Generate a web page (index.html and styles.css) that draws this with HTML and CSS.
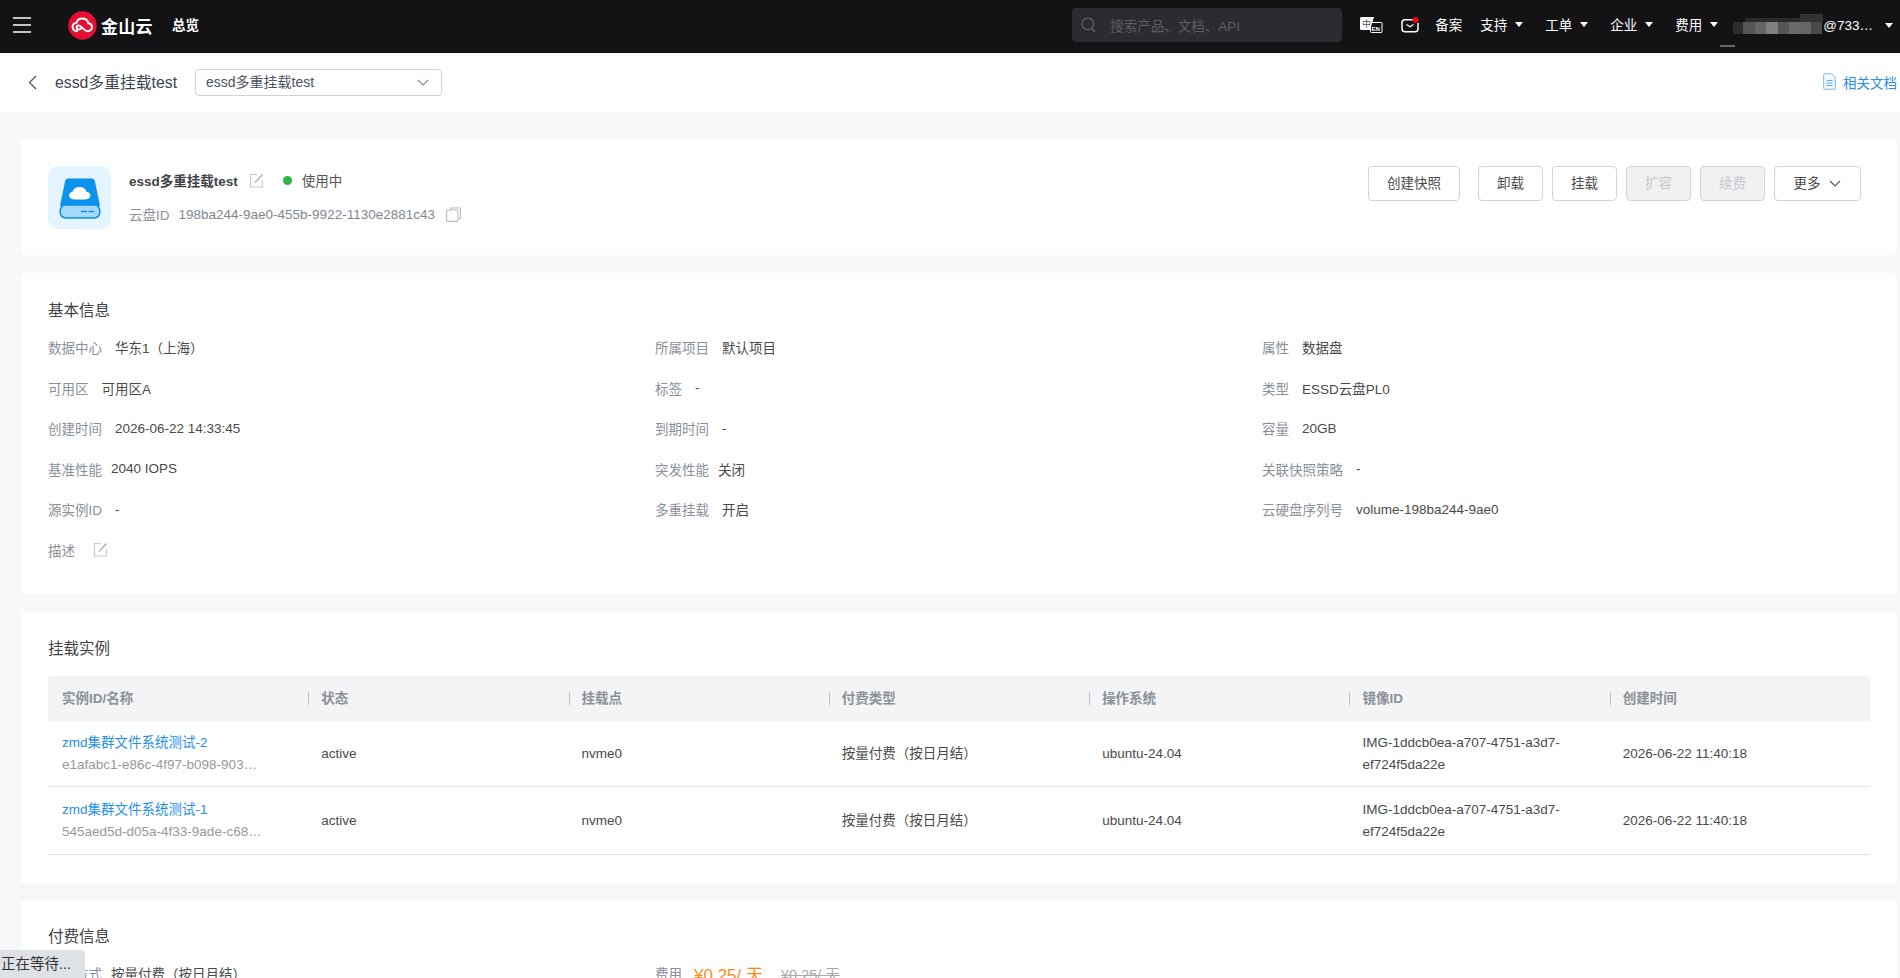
FILE: index.html
```html
<!DOCTYPE html>
<html lang="zh-CN">
<head>
    <meta charset="UTF-8">
    <meta name="viewport" content="width=device-width, initial-scale=1.0">
    <title>云盘详情</title>
    <link rel="stylesheet" href="styles.css">
</head>
<body>
    <header class="topbar">
        <div class="topbar-left">
            <svg class="menu-icon" width="18" height="16" viewBox="0 0 18 16"><path d="M0 1h18M0 8h18M0 15h18" stroke="#fff" stroke-width="1.6"/></svg>
            <svg class="logo-mark" width="29" height="29" viewBox="0 0 29 29">
                <circle cx="14.5" cy="14.5" r="14.2" fill="#e60f32"/>
                <path d="M9 20.2c-2.6 0-4.4-1.8-4.4-4.1 0-2.2 1.6-3.9 3.8-4 .7-2.7 3-4.5 5.9-4.5 3 0 5.4 2 6 4.7 2.1.3 3.6 1.9 3.6 3.9 0 2.2-1.8 4-4.2 4-2.4 0-3.8-1.6-5.3-3.2-1.3-1.4-2.3-2.5-3.7-2.5-1.2 0-2.1.9-2.1 2 0 1.2.9 2 2.1 2 .8 0 1.5-.4 2.2-1" fill="none" stroke="#fff" stroke-width="2" stroke-linecap="round" stroke-linejoin="round"/>
            </svg>
            <span class="logo-text">金山云</span>
            <span class="overview">总览</span>
        </div>
        <div class="topbar-right">
            <div class="search-box">
                <svg width="15" height="16" viewBox="0 0 15 16"><circle cx="6.8" cy="6.8" r="5.8" fill="none" stroke="#66666c" stroke-width="1.2"/><path d="M11 11.5l3 3.5" stroke="#66666c" stroke-width="1.2"/></svg>
                <span>搜索产品、文档、API</span>
            </div>
            <svg class="lang-icon" width="23" height="16" viewBox="0 0 23 16">
                <rect x="10.5" y="5.5" width="11.5" height="10" rx="1" fill="#131315" stroke="#fff"/>
                <path d="M1.5 0H14L10 13H1.5A1.5 1.5 0 0 1 0 11.5V1.5A1.5 1.5 0 0 1 1.5 0z" fill="#fff"/>
                <text x="2" y="9.5" class="lang-zh">中</text>
                <text x="11.5" y="13.5" class="lang-en">EN</text>
            </svg>
            <svg class="mail-icon" width="19" height="16" viewBox="0 0 19 16">
                <path d="M13 2.8H5a3 3 0 0 0-3 3v6a3 3 0 0 0 3 3h10a3 3 0 0 0 3-3V6" fill="none" stroke="#fff" stroke-width="1.5"/>
                <path d="M6.5 7.5l3.5 2.3 3.5-2.3" fill="none" stroke="#fff" stroke-width="1.2"/>
                <circle cx="15.5" cy="3" r="3" fill="#f00010"/>
            </svg>
            <span class="nav-item">备案</span>
            <span class="nav-item has-caret">支持</span>
            <span class="nav-item has-caret">工单</span>
            <span class="nav-item has-caret">企业</span>
            <span class="nav-item has-caret">费用</span>
            <div class="user">
                <svg class="mosaic" width="103" height="44" viewBox="0 0 103 44">
                    <rect x="0" y="42" width="15" height="2" fill="#66666a"/>
                    <rect x="25" y="15" width="55" height="4" fill="#2a2a2c"/>
                    <rect x="80" y="11" width="23" height="8" fill="#333335"/>
                    <rect x="13" y="19" width="10" height="12" fill="#2c2c2e"/>
                    <rect x="23" y="19" width="12" height="12" fill="#555557"/>
                    <rect x="35" y="19" width="11" height="12" fill="#666668"/>
                    <rect x="46" y="19" width="12" height="12" fill="#808082"/>
                    <rect x="58" y="19" width="11" height="12" fill="#555557"/>
                    <rect x="69" y="19" width="11" height="12" fill="#6a6a6c"/>
                    <rect x="80" y="19" width="11" height="12" fill="#666668"/>
                    <rect x="91" y="19" width="11" height="12" fill="#4a4a4c"/>
                </svg>
                <span>@733…</span>
                <i class="caret"></i>
            </div>
        </div>
    </header>

    <div class="subheader">
        <div class="subheader-left">
            <svg class="back-icon" width="9" height="15" viewBox="0 0 9 15"><path d="M8 1L1.5 7.5 8 14" fill="none" stroke="#4b5566" stroke-width="1.3"/></svg>
            <span class="disk-name">essd多重挂载test</span>
            <div class="disk-select">
                <span>essd多重挂载test</span>
                <svg width="12" height="7" viewBox="0 0 12 7"><path d="M1 1l5 5 5-5" fill="none" stroke="#7d8794" stroke-width="1.1"/></svg>
            </div>
        </div>
        <a class="doc-link">
            <svg width="13" height="17" viewBox="0 0 13 17"><path d="M1.5.7h6.8l4 4v10.3a1.3 1.3 0 0 1-1.3 1.3H1.5A1.3 1.3 0 0 1 .7 15V2A1.3 1.3 0 0 1 1.5.7z" fill="#f2f8fe" stroke="#7db8f3"/><path d="M3.5 7.5h6M3.5 10h6M3.5 12.5h6" stroke="#5aa5ef" stroke-width="1.2"/></svg>
            <span>相关文档</span>
        </a>
    </div>

    <main class="content">
        <section class="card summary-card">
            <div class="summary-left">
                <div class="disk-avatar">
                    <svg width="42" height="42" viewBox="0 0 42 42">
                        <path d="M9.5 1.5h23a3.5 3.5 0 0 1 3.4 2.8L41 29H1L6.1 4.3A3.5 3.5 0 0 1 9.5 1.5z" fill="#0b92ee"/>
                        <rect x="1.2" y="28" width="39.6" height="13" rx="5.5" fill="#a5d8fb" stroke="#0b92ee" stroke-width="1.5"/>
                        <path d="M22 34.5h6M29.5 34.5h5.5" stroke="#0b92ee" stroke-width="1.6"/>
                        <path d="M15 22.5c-3 0-5-1.6-5-3.9 0-2.1 1.6-3.6 3.6-3.8.6-2.8 3.5-4.8 6.9-4.8 3.6 0 6.4 2.1 7 4.8 2.2.2 3.9 1.7 3.9 3.8 0 2.3-2 3.9-5 3.9z" fill="#fff"/>
                    </svg>
                </div>
                <div class="summary-text">
                    <div class="summary-name">
                        <strong>essd多重挂载test</strong>
                        <svg class="edit-icon" width="15" height="15" viewBox="0 0 15 15"><path d="M8 1.5H1.5v12.5h12V7.5" fill="none" stroke="#c5cad1" stroke-width="1.2"/><path d="M6 9.5L13.5 1.5" stroke="#a4abb5" stroke-width="1.2"/></svg>
                        <i class="status-dot"></i>
                        <span class="status-text">使用中</span>
                    </div>
                    <div class="summary-id">
                        <span class="id-label">云盘ID</span>
                        <span class="id-value">198ba244-9ae0-455b-9922-1130e2881c43</span>
                        <svg width="15" height="15" viewBox="0 0 15 15"><path d="M4.5 2.5V1h10v10.5h-2" fill="none" stroke="#b4bac3" stroke-width="1.1"/><rect x=".6" y="3" width="11.4" height="11.4" rx="1" fill="none" stroke="#b4bac3" stroke-width="1.1"/></svg>
                    </div>
                </div>
            </div>
            <div class="actions">
                <button class="btn btn-snapshot">创建快照</button>
                <button class="btn">卸载</button>
                <button class="btn">挂载</button>
                <button class="btn btn-disabled">扩容</button>
                <button class="btn btn-disabled">续费</button>
                <button class="btn btn-more">更多
                    <svg width="12" height="7" viewBox="0 0 12 7"><path d="M1 1l5 5 5-5" fill="none" stroke="#555" stroke-width="1.1"/></svg>
                </button>
            </div>
        </section>

        <section class="card info-card">
            <h3 class="card-title">基本信息</h3>
            <div class="info-grid">
                <div class="field"><span class="field-label">数据中心</span><span>华东1（上海）</span></div>
                <div class="field"><span class="field-label">所属项目</span><span>默认项目</span></div>
                <div class="field"><span class="field-label">属性</span><span>数据盘</span></div>

                <div class="field"><span class="field-label">可用区</span><span>可用区A</span></div>
                <div class="field"><span class="field-label">标签</span><span>-</span></div>
                <div class="field"><span class="field-label">类型</span><span>ESSD云盘PL0</span></div>

                <div class="field"><span class="field-label">创建时间</span><span>2026-06-22 14:33:45</span></div>
                <div class="field"><span class="field-label">到期时间</span><span>-</span></div>
                <div class="field"><span class="field-label">容量</span><span>20GB</span></div>

                <div class="field field-tight"><span class="field-label">基准性能</span><span>2040 IOPS</span></div>
                <div class="field field-tight"><span class="field-label">突发性能</span><span>关闭</span></div>
                <div class="field"><span class="field-label">关联快照策略</span><span>-</span></div>

                <div class="field"><span class="field-label">源实例ID</span><span>-</span></div>
                <div class="field"><span class="field-label">多重挂载</span><span>开启</span></div>
                <div class="field"><span class="field-label">云硬盘序列号</span><span>volume-198ba244-9ae0</span></div>

                <div class="field field-desc">
                    <span class="field-label">描述</span>
                    <svg class="edit-icon" width="15" height="15" viewBox="0 0 15 15"><path d="M8 1.5H1.5v12.5h12V7.5" fill="none" stroke="#c5cad1" stroke-width="1.2"/><path d="M6 9.5L13.5 1.5" stroke="#a4abb5" stroke-width="1.2"/></svg>
                </div>
            </div>
        </section>

        <section class="card mount-card">
            <h3 class="card-title">挂载实例</h3>
            <table class="mount-table">
                <thead>
                    <tr>
                        <th><span>实例ID/名称</span></th>
                        <th><span>状态</span></th>
                        <th><span>挂载点</span></th>
                        <th><span>付费类型</span></th>
                        <th><span>操作系统</span></th>
                        <th><span>镜像ID</span></th>
                        <th><span>创建时间</span></th>
                    </tr>
                </thead>
                <tbody>
                    <tr>
                        <td><a class="instance-link">zmd集群文件系统测试-2</a><div class="instance-id">e1afabc1-e86c-4f97-b098-903…</div></td>
                        <td>active</td>
                        <td>nvme0</td>
                        <td>按量付费（按日月结）</td>
                        <td>ubuntu-24.04</td>
                        <td>IMG-1ddcb0ea-a707-4751-a3d7-ef724f5da22e</td>
                        <td>2026-06-22 11:40:18</td>
                    </tr>
                    <tr class="row-last">
                        <td><a class="instance-link">zmd集群文件系统测试-1</a><div class="instance-id">545aed5d-d05a-4f33-9ade-c68…</div></td>
                        <td>active</td>
                        <td>nvme0</td>
                        <td>按量付费（按日月结）</td>
                        <td>ubuntu-24.04</td>
                        <td>IMG-1ddcb0ea-a707-4751-a3d7-ef724f5da22e</td>
                        <td>2026-06-22 11:40:18</td>
                    </tr>
                </tbody>
            </table>
        </section>

        <section class="card billing-card">
            <h3 class="card-title">付费信息</h3>
            <div class="info-grid">
                <div class="field field-tight"><span class="field-label">付费方式</span><span>按量付费（按日月结）</span></div>
                <div class="field field-price">
                    <span class="field-label">费用</span>
                    <span class="price">¥0.25/ 天</span>
                    <span class="price-old">¥0.25/ 天</span>
                </div>
            </div>
        </section>
    </main>

    <div class="status-bubble">正在等待...</div>
</body>
</html>
```

FILE: styles.css
```css
html, body {
    height: 978px;
    overflow: hidden;
}
body {
    margin: 0;
    padding: 0;
    background-color: #f7f8fa;
    font-family: "Liberation Sans", "Noto Sans CJK SC", sans-serif;
    font-size: 13.5px;
    color: #4a4a4a;
}

/* 顶部导航 */
.topbar {
    height: 53px;
    box-sizing: border-box;
    padding-bottom: 3px;
    background-color: #131315;
    display: flex;
    justify-content: space-between;
    align-items: center;
    color: #fff;
}
.topbar-left {
    display: flex;
    align-items: center;
    padding-left: 13px;
}
.menu-icon {
    margin-right: 37px;
}
.logo-text {
    margin-left: 4px;
    font-size: 17px;
    font-weight: bold;
    letter-spacing: 0.3px;
}
.overview {
    margin-left: 19px;
    margin-top: -2px;
    font-weight: bold;
}
.topbar-right {
    display: flex;
    align-items: center;
    padding-right: 7px;
}
.search-box {
    width: 270px;
    height: 34px;
    box-sizing: border-box;
    padding-left: 9px;
    background-color: #2b2b31;
    border-radius: 4px;
    display: flex;
    align-items: center;
    gap: 14px;
    color: #5e5e64;
    margin-right: 18px;
}
.lang-zh {
    font-size: 9px;
    fill: #555;
}
.lang-en {
    font-size: 6px;
    font-weight: bold;
    fill: #fff;
}
.mail-icon {
    margin-left: 17px;
    margin-right: 16px;
}
.nav-item {
    margin-right: 18px;
    margin-top: -2px;
    display: flex;
    align-items: center;
}
.has-caret {
    margin-right: 22px;
}
.has-caret::after, .caret {
    content: "";
    display: inline-block;
    margin-left: 8px;
    border-left: 4px solid transparent;
    border-right: 4px solid transparent;
    border-top: 5px solid #fff;
}
.user {
    display: flex;
    align-items: center;
    margin-left: -20px;
}
.caret {
    margin-left: 12px;
}

/* 二级标题栏 */
.subheader {
    height: 59px;
    background-color: #fff;
    box-shadow: inset 0 5px 4px -3px rgba(0,0,0,0.05);
    display: flex;
    justify-content: space-between;
    align-items: center;
}
.subheader-left {
    display: flex;
    align-items: center;
    padding-left: 28px;
}
.disk-name {
    margin-left: 18px;
    margin-top: -3px;
    font-size: 15.8px;
    color: #3d4450;
}
.disk-select {
    margin-left: 18px;
    width: 247px;
    height: 27px;
    box-sizing: border-box;
    border: 1px solid #d0d3d9;
    border-radius: 4px;
    padding: 0 12px 4px 10px;
    display: flex;
    align-items: center;
    justify-content: space-between;
    font-size: 14px;
    color: #4c5361;
}
.disk-select svg {
    margin-top: 4px;
}
.doc-link {
    display: flex;
    align-items: center;
    gap: 7px;
    margin-top: -2px;
    color: #2b8fe8;
    padding-right: 3px;
}

/* 卡片 */
.content {
    padding: 27px 3px 0 21px;
    display: flex;
    flex-direction: column;
    gap: 18px;
}
.card {
    background-color: #fff;
    border-radius: 4px;
    box-sizing: border-box;
    padding: 0 27px;
}
.card-title {
    margin: 0;
    font-size: 15.5px;
    font-weight: normal;
    color: #3f4348;
    line-height: 20px;
}
.summary-card {
    height: 116px;
    display: flex;
    justify-content: space-between;
    align-items: flex-start;
    padding-top: 27px;
    padding-right: 36px;
}
.summary-left {
    display: flex;
    align-items: center;
    gap: 18px;
}
.disk-avatar {
    width: 63px;
    height: 63px;
    border-radius: 10px;
    background-color: #e5f5ff;
    display: flex;
    align-items: center;
    justify-content: center;
}
.summary-text {
    display: flex;
    flex-direction: column;
    gap: 15px;
    margin-top: -1px;
}
.summary-name, .summary-id {
    display: flex;
    align-items: center;
    height: 19px;
}
.summary-name strong {
    color: #3f4348;
}
.edit-icon {
    margin-left: 11px;
}
.status-dot {
    width: 9px;
    height: 9px;
    border-radius: 50%;
    background-color: #2fb344;
    margin-left: 19px;
}
.status-text {
    margin-left: 10px;
    color: #555;
}
.id-label {
    color: #8a8f99;
}
.id-value {
    color: #808590;
    margin-left: 9px;
    margin-right: 11px;
}
.actions {
    display: flex;
    gap: 9px;
}
.btn {
    width: 65px;
    height: 35px;
    background-color: #fff;
    border: 1px solid #d0d5dc;
    border-radius: 4px;
    font-family: inherit;
    font-size: 13.5px;
    color: #4a4a4a;
    padding: 0 0 4px;
    cursor: pointer;
}
.btn-snapshot {
    width: 92px;
    margin-right: 9px;
}
.btn-disabled {
    background-color: #f0f1f3;
    color: #c6c8cb;
    cursor: not-allowed;
}
.btn-more {
    width: 87px;
}
.btn-more svg {
    margin-left: 5px;
    vertical-align: 1px;
}

.info-card {
    height: 321px;
    padding-top: 28px;
}
.info-grid {
    display: grid;
    grid-template-columns: repeat(3, 607px);
    grid-auto-rows: 40.5px;
    margin-top: 6px;
    align-items: center;
}
.field {
    display: flex;
    align-items: center;
    gap: 13px;
}
.field-tight {
    gap: 9px;
}
.field-label {
    color: #8a8f99;
}
.field-desc {
    gap: 18px;
}
.field-desc .edit-icon {
    margin-left: 0;
}

/* 挂载实例表格 */
.mount-card {
    height: 271px;
    padding-top: 27px;
}
.mount-table {
    width: 1822px;
    margin-top: 17px;
    border-collapse: collapse;
    table-layout: fixed;
}
.mount-table th {
    height: 45px;
    padding: 0;
    background-color: #f3f4f6;
    text-align: left;
    font-size: 13.5px;
    font-weight: bold;
    color: #8b9097;
}
.mount-table th span {
    display: block;
    line-height: 13px;
    padding-left: 12px;
    border-left: 1px solid #bcc0c5;
}
.mount-table th:first-child {
    border-radius: 4px 0 0 0;
}
.mount-table th:last-child {
    border-radius: 0 4px 0 0;
}
.mount-table th:first-child span {
    border-left: none;
    padding-left: 14px;
}
.mount-table td {
    height: 65px;
    padding: 0 30px 0 13px;
    border-bottom: 1px solid #e3e4e6;
    line-height: 22px;
}
.mount-table td:first-child {
    padding-left: 14px;
    padding-right: 0;
}
.mount-table .row-last td {
    height: 67px;
}
.instance-link {
    color: #1f8fea;
}
.instance-id {
    color: #999;
    white-space: nowrap;
}

.billing-card {
    height: 120px;
    padding-top: 26px;
}
.field-price {
    gap: 12px;
}
.price {
    color: #ff8c1a;
    font-size: 17px;
}
.price-old {
    color: #aaa;
    margin-left: 6px;
    font-size: 14.5px;
    text-decoration: line-through;
}

/* 左下角状态提示 */
.status-bubble {
    position: fixed;
    left: 0;
    bottom: 0;
    width: 85px;
    height: 28px;
    box-sizing: border-box;
    padding-left: 1px;
    line-height: 29px;
    background-color: #dee1e6;
    border-radius: 0 4px 0 0;
    font-size: 14.5px;
    color: #333;
    white-space: nowrap;
}
```
